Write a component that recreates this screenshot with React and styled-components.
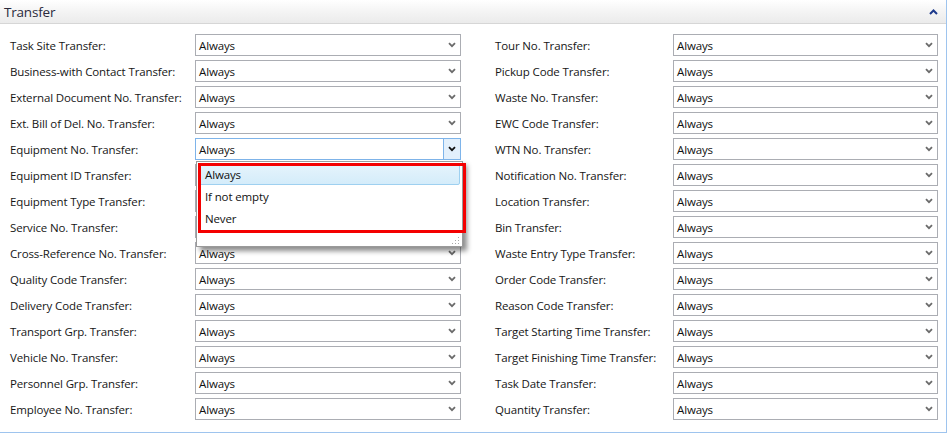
import React from "react";
import styled, { createGlobalStyle } from "styled-components";

const GlobalStyle = createGlobalStyle`
  html, body {
    margin: 0;
    padding: 0;
    background: #ffffff;
  }
  body {
    font-family: "Open Sans", "Noto Sans", sans-serif;
    color: #1e1e1e;
  }
`;

const Panel = styled.section`
  width: 947px;
  height: 433px;
  box-sizing: border-box;
  border-right: 1px solid #9ec4ee;
  border-bottom: 1px solid #9ec4ee;
  background: #fff;
`;

const Header = styled.div`
  height: 24px;
  box-sizing: border-box;
  display: flex;
  align-items: center;
  justify-content: space-between;
  padding: 0 8px 0 4px;
  background: linear-gradient(to bottom, #ffffff 0%, #f4f4f4 50%, #ebebeb 100%);
  border-bottom: 1px solid #d6d6d6;
  > h2 {
    margin: 0;
    font-size: 13.5px;
    letter-spacing: -0.2px;
    font-weight: 400;
    color: #2a2a3c;
  }
`;

const Fields = styled.div`
  display: flex;
  gap: 34px;
  padding: 10px 0 0 10px;
`;

const Column = styled.div`
  display: flex;
  flex-direction: column;
  gap: 4px;
`;

const Row = styled.div`
  display: grid;
  grid-template-columns: ${(p) => p.$label}px ${(p) => p.$field}px;
  align-items: center;
  height: 22px;
  font-size: 11.5px;
  letter-spacing: -0.13px;
  > label {
    white-space: nowrap;
    color: #161616;
  }
`;

const SelectBox = styled.div`
  position: relative;
  height: 22px;
  box-sizing: border-box;
  border: 1px solid ${(p) => (p.$open ? "#7eb4ea" : "#abadb3")};
  display: flex;
  align-items: center;
  padding-left: 3px;
  color: #111;
  background: #fff;
`;

const Arrow = styled.span`
  position: absolute;
  right: 0;
  top: 0;
  bottom: 0;
  width: 17px;
  display: flex;
  align-items: center;
  justify-content: center;
  box-sizing: border-box;
  background: ${(p) => (p.$open ? "#e3f0fc" : "transparent")};
  border-left: ${(p) => (p.$open ? "1px solid #7eb4ea" : "none")};
`;

const DropList = styled.div`
  position: absolute;
  left: 0;
  top: 22px;
  width: 267px;
  height: 86px;
  box-sizing: border-box;
  background: #fff;
  border: 1px solid #9a9a9a;
  box-shadow: 4px 4px 5px rgba(0, 0, 0, 0.45);
  padding: 1px 2px;
  z-index: 5;
`;

const Option = styled.div`
  height: 22px;
  box-sizing: border-box;
  display: flex;
  align-items: center;
  padding-left: 5px;
  border-radius: 2px;
  border: 1px solid ${(p) => (p.$active ? "#9ed0f0" : "transparent")};
  background: ${(p) =>
    p.$active ? "linear-gradient(to bottom, #e6f4fc, #d4ecfa)" : "transparent"};
`;

const Grip = styled.div`
  position: absolute;
  right: 3px;
  bottom: 2px;
  width: 8px;
  height: 8px;
  background-image: radial-gradient(circle, #a8a8a8 0.9px, transparent 1px);
  background-size: 3px 3px;
  clip-path: polygon(100% 0, 100% 100%, 0 100%);
`;

const Highlight = styled.div`
  position: absolute;
  left: 2px;
  top: 24px;
  width: 268px;
  height: 70px;
  box-sizing: border-box;
  border: 3px solid #f40000;
  z-index: 6;
  pointer-events: none;
`;

const ChevronDown = ({ color = "#6b6b6b" }) => (
  <svg width="8" height="6" viewBox="0 0 8 6">
    <path d="M1 1.2 L4 4.2 L7 1.2" fill="none" stroke={color} strokeWidth="1.8" />
  </svg>
);

const ChevronUp = () => (
  <svg width="9" height="6" viewBox="0 0 9 6">
    <path d="M1 5 L4.5 1.5 L8 5" fill="none" stroke="#1d3a8c" strokeWidth="2" />
  </svg>
);

const Select = ({ value = "Always", open }) => (
  <SelectBox $open={open}>
    {value}
    <Arrow $open={open}>
      <ChevronDown color={open ? "#111" : "#6b6b6b"} />
    </Arrow>
    {open && (
      <>
        <DropList>
          <Option $active>Always</Option>
          <Option>If not empty</Option>
          <Option>Never</Option>
          <Grip />
        </DropList>
        <Highlight />
      </>
    )}
  </SelectBox>
);

const left = [
  "Task Site Transfer:",
  "Business-with Contact Transfer:",
  "External Document No. Transfer:",
  "Ext. Bill of Del. No. Transfer:",
  "Equipment No. Transfer:",
  "Equipment ID Transfer:",
  "Equipment Type Transfer:",
  "Service No. Transfer:",
  "Cross-Reference No. Transfer:",
  "Quality Code Transfer:",
  "Delivery Code Transfer:",
  "Transport Grp. Transfer:",
  "Vehicle No. Transfer:",
  "Personnel Grp. Transfer:",
  "Employee No. Transfer:",
];

const right = [
  "Tour No. Transfer:",
  "Pickup Code Transfer:",
  "Waste No. Transfer:",
  "EWC Code Transfer:",
  "WTN No. Transfer:",
  "Notification No. Transfer:",
  "Location Transfer:",
  "Bin Transfer:",
  "Waste Entry Type Transfer:",
  "Order Code Transfer:",
  "Reason Code Transfer:",
  "Target Starting Time Transfer:",
  "Target Finishing Time Transfer:",
  "Task Date Transfer:",
  "Quantity Transfer:",
];

export default function App() {
  return (
    <>
      <GlobalStyle />
      <Panel>
        <Header>
          <h2>Transfer</h2>
          <ChevronUp />
        </Header>
        <Fields>
          <Column>
            {left.map((l, i) => (
              <Row key={l} $label={185} $field={266}>
                <label>{l}</label>
                <Select open={i === 4} />
              </Row>
            ))}
          </Column>
          <Column>
            {right.map((l) => (
              <Row key={l} $label={178} $field={265}>
                <label>{l}</label>
                <Select />
              </Row>
            ))}
          </Column>
        </Fields>
      </Panel>
    </>
  );
}
